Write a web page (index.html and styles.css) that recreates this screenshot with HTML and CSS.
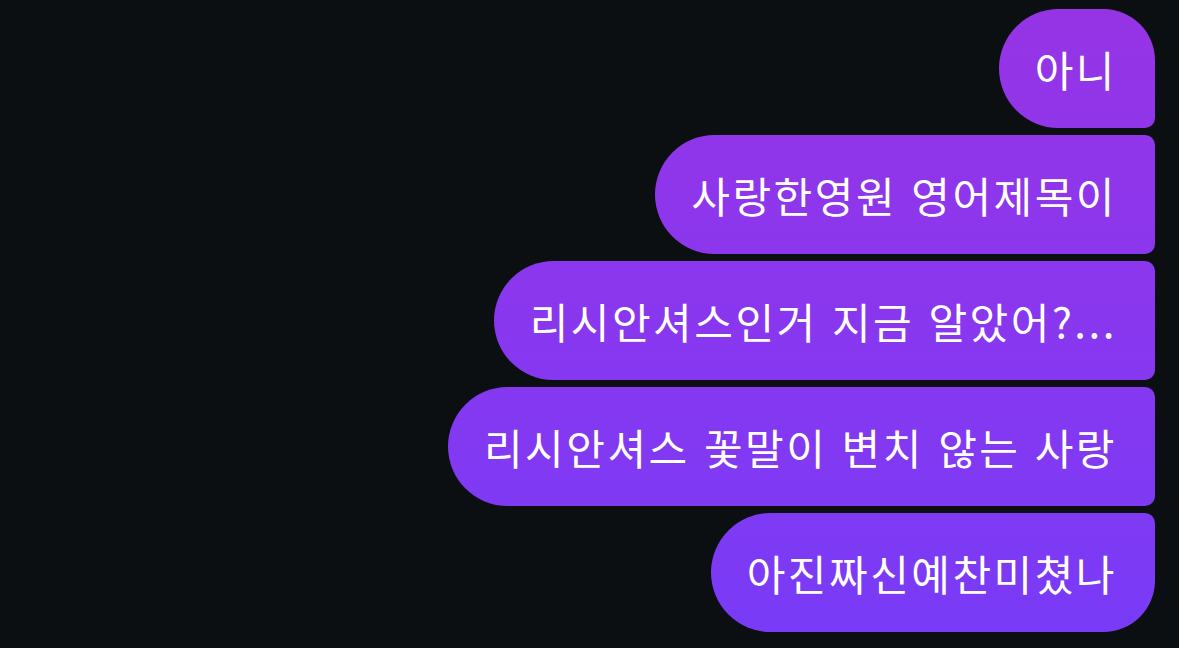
FILE: index.html
```html
<!DOCTYPE html>
<html lang="ko">
<head>
    <meta charset="UTF-8">
    <meta name="viewport" content="width=device-width, initial-scale=1.0">
    <title>Messages</title>
    <link rel="stylesheet" href="styles.css">
</head>
<body>

    <div class="thread">
        <div class="bubble first">아니</div>
        <div class="bubble">사랑한영원 영어제목이</div>
        <div class="bubble">리시안셔스인거 지금 알았어?...</div>
        <div class="bubble">리시안셔스 꽃말이 변치 않는 사랑</div>
        <div class="bubble last">아진짜신예찬미쳤나</div>
    </div>

</body>
</html>
```

FILE: styles.css
```css
body {
    margin: 0;
    padding: 0;
    background-color: #0c0f12;
    font-family: "Noto Sans CJK KR", "Noto Sans", sans-serif;
}

.thread {
    display: flex;
    flex-direction: column;
    align-items: flex-end;
    gap: 7px;
    padding: 9px 24px 0 0;
}

.bubble {
    color: white;
    font-size: 42px;
    line-height: 50px;
    letter-spacing: 2.5px;
    padding: 35px 38px 34px 36px;
    border-radius: 60px 10px 10px 60px;
    background: linear-gradient(180deg, #9634e5 0%, #8a37ee 45%, #783bf7 100%) fixed;
    white-space: nowrap;
}

.first {
    border-top-right-radius: 52px;
}

.last {
    border-bottom-right-radius: 52px;
}
```
